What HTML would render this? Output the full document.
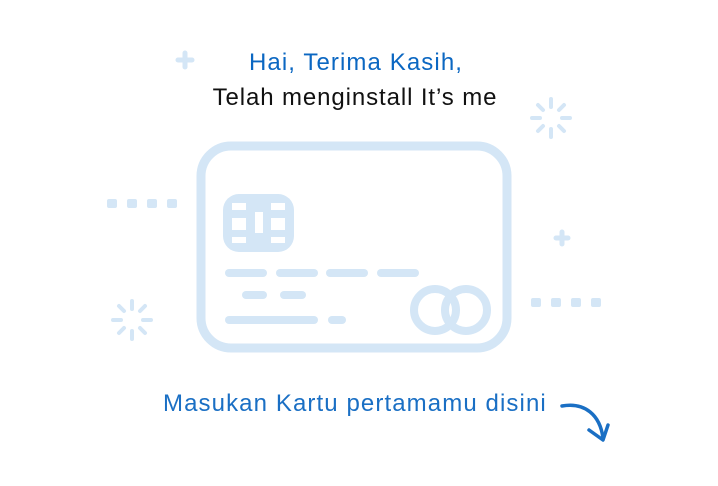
<!DOCTYPE html>
<html><head><style>
body{margin:0;width:718px;height:486px;background:#fff;overflow:hidden;position:relative;font-family:"Liberation Sans",sans-serif}
</style></head><body>
<svg width="718" height="486" style="position:absolute;left:0;top:0">
<g stroke="#d4e6f6" fill="none" stroke-linecap="round">
<rect x="201" y="146" width="306" height="202" rx="30" stroke-width="9"/>
<g stroke-width="8">
<line x1="229" y1="273" x2="263" y2="273"/><line x1="280" y1="273" x2="314" y2="273"/>
<line x1="330" y1="273" x2="364" y2="273"/><line x1="381" y1="273" x2="415" y2="273"/>
<line x1="246" y1="295" x2="263" y2="295"/><line x1="284" y1="295" x2="302" y2="295"/>
<line x1="229" y1="320" x2="314" y2="320"/><line x1="332" y1="320" x2="342" y2="320"/>
<circle cx="435" cy="310" r="21"/><circle cx="466" cy="310" r="21"/>
</g>
<g stroke-width="5">
<line x1="185" y1="53" x2="185" y2="67"/><line x1="178" y1="60" x2="192" y2="60"/>
<line x1="562" y1="232" x2="562" y2="244"/><line x1="556" y1="238" x2="568" y2="238"/>
</g>
<g stroke-width="4">
<line x1="551" y1="99" x2="551" y2="107"/><line x1="551" y1="129" x2="551" y2="137"/>
<line x1="532" y1="118" x2="540" y2="118"/><line x1="562" y1="118" x2="570" y2="118"/>
<line x1="538" y1="105" x2="543" y2="110"/><line x1="559" y1="126" x2="564" y2="131"/>
<line x1="564" y1="105" x2="559" y2="110"/><line x1="543" y1="126" x2="538" y2="131"/>
<line x1="132" y1="301" x2="132" y2="309"/><line x1="132" y1="331" x2="132" y2="339"/>
<line x1="113" y1="320" x2="121" y2="320"/><line x1="143" y1="320" x2="151" y2="320"/>
<line x1="119" y1="306" x2="124" y2="311"/><line x1="140" y1="328" x2="145" y2="333"/>
<line x1="145" y1="306" x2="140" y2="311"/><line x1="124" y1="328" x2="119" y2="333"/>
</g>
</g>
<g fill="#d4e6f6">
<rect x="223" y="194" width="71" height="58" rx="16"/>
<rect x="107" y="199" width="10" height="9" rx="2"/><rect x="127" y="199" width="10" height="9" rx="2"/>
<rect x="147" y="199" width="10" height="9" rx="2"/><rect x="167" y="199" width="10" height="9" rx="2"/>
<rect x="531" y="298" width="10" height="9" rx="2"/><rect x="551" y="298" width="10" height="9" rx="2"/>
<rect x="571" y="298" width="10" height="9" rx="2"/><rect x="591" y="298" width="10" height="9" rx="2"/>
</g>
<g fill="#fff">
<rect x="232" y="203" width="14" height="7"/><rect x="232" y="218" width="14" height="12"/><rect x="232" y="237" width="14" height="6"/>
<rect x="271" y="203" width="14" height="7"/><rect x="271" y="218" width="14" height="12"/><rect x="271" y="237" width="14" height="6"/>
<rect x="255" y="212" width="8" height="21"/>
</g>
<g stroke="#1a6fc4" stroke-width="3.5" fill="none" stroke-linecap="round" stroke-linejoin="round">
<path d="M562 406 C585 402 600 415 603 438"/>
<path d="M589 430 L603 440 L608 425"/>
</g>
<g font-family="Liberation Sans, sans-serif" font-size="24">
<text x="356" y="70" text-anchor="middle" fill="#0b67c2" letter-spacing="1.1">Hai, Terima Kasih,</text>
<text x="355" y="105" text-anchor="middle" fill="#111" letter-spacing="0.9">Telah menginstall It’s me</text>
<text x="163" y="411" fill="#1a6fc4" letter-spacing="1.1">Masukan Kartu pertamamu disini</text>
</g>
</svg>
</body></html>
